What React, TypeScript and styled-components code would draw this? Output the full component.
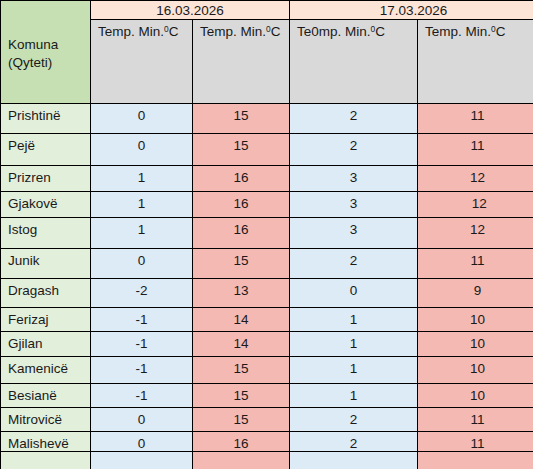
import React from "react";
import styled, { createGlobalStyle } from "styled-components";

const Global = createGlobalStyle`
  html, body { margin: 0; padding: 0; overflow: hidden; background: #fff; }
  body { font-family: "Liberation Sans", Arial, sans-serif; }
`;

const ROW_HEIGHTS = [30, 32, 26, 26, 31, 30, 29, 24, 25, 27, 24, 24, 20, 30];

const Grid = styled.div`
  display: grid;
  grid-template-columns: 90px 102px 97px 128px 120px;
  grid-template-rows: 19px 84px ${ROW_HEIGHTS.map((h) => `${h}px`).join(" ")};
  width: max-content;
  border-top: 1px solid #000;
  border-left: 1px solid #000;
  font-size: 13.5px;
  color: #1a1a1a;
`;

const Cell = styled.div<{ $bg: string; $align?: "left" | "center" }>`
  box-sizing: border-box;
  border-right: 1px solid #000;
  border-bottom: 1px solid #000;
  background: ${(p) => p.$bg};
  text-align: ${(p) => p.$align ?? "center"};
  line-height: 17px;
  padding: 3px 7px 0;
  white-space: nowrap;
  overflow: hidden;
`;

const CornerCell = styled(Cell)`
  grid-row: 1 / span 2;
  grid-column: 1;
  display: flex;
  flex-direction: column;
  justify-content: center;
  line-height: 18px;
  padding: 4px 7px 0;
  white-space: normal;
`;

const DateCell = styled(Cell)<{ $col: number }>`
  grid-row: 1;
  grid-column: ${(p) => p.$col} / span 2;
  padding: 1px 0 0;
  line-height: 17px;
`;

const HeadCell = styled(Cell)`
  text-align: left;
`;

const Sup = styled.sup`
  font-size: 0.62em;
  vertical-align: 0.5em;
  line-height: 0;
`;

const GREEN_HEAD = "#c6e0b4";
const GREEN = "#e2efda";
const PEACH = "#fce4d6";
const GRAY = "#d9d9d9";
const BLUE = "#ddebf7";
const PINK = "#f4b9b2";

const rows: [string, string, string, string, string][] = [
  ["Prishtinë", "0", "15", "2", "11"],
  ["Pejë", "0", "15", "2", "11"],
  ["Prizren", "1", "16", "3", "12"],
  ["Gjakovë", "1", "16", "3", "\u00a012"],
  ["Istog", "1", "16", "3", "12"],
  ["Junik", "0", "15", "2", "11"],
  ["Dragash", "-2", "13", "0", "9"],
  ["Ferizaj", "-1", "14", "1", "10"],
  ["Gjilan", "-1", "14", "1", "10"],
  ["Kamenicë", "-1", "15", "1", "10"],
  ["Besianë", "-1", "15", "1", "10"],
  ["Mitrovicë", "0", "15", "2", "11"],
  ["Malishevë", "0", "16", "2", "11"],
  ["", "", "", "", ""],
];

const Head = ({ label }: { label: string }) => (
  <HeadCell $bg={GRAY}>
    {label}
    <Sup>0</Sup>C
  </HeadCell>
);

export default function App() {
  return (
    <>
      <Global />
      <Grid>
        <CornerCell $bg={GREEN_HEAD} $align="left">
          <span>Komuna</span>
          <span>(Qyteti)</span>
        </CornerCell>
        <DateCell $bg={PEACH} $col={2}>16.03.2026</DateCell>
        <DateCell $bg={PEACH} $col={4}>17.03.2026</DateCell>
        <Head label="Temp. Min." />
        <Head label="Temp. Min." />
        <Head label="Te0mp. Min." />
        <Head label="Temp. Min." />
        {rows.map((r, i) => (
          <React.Fragment key={i}>
            <Cell $bg={GREEN} $align="left">{r[0]}</Cell>
            <Cell $bg={BLUE}>{r[1]}</Cell>
            <Cell $bg={PINK}>{r[2]}</Cell>
            <Cell $bg={BLUE}>{r[3]}</Cell>
            <Cell $bg={PINK}>{r[4]}</Cell>
          </React.Fragment>
        ))}
      </Grid>
    </>
  );
}
